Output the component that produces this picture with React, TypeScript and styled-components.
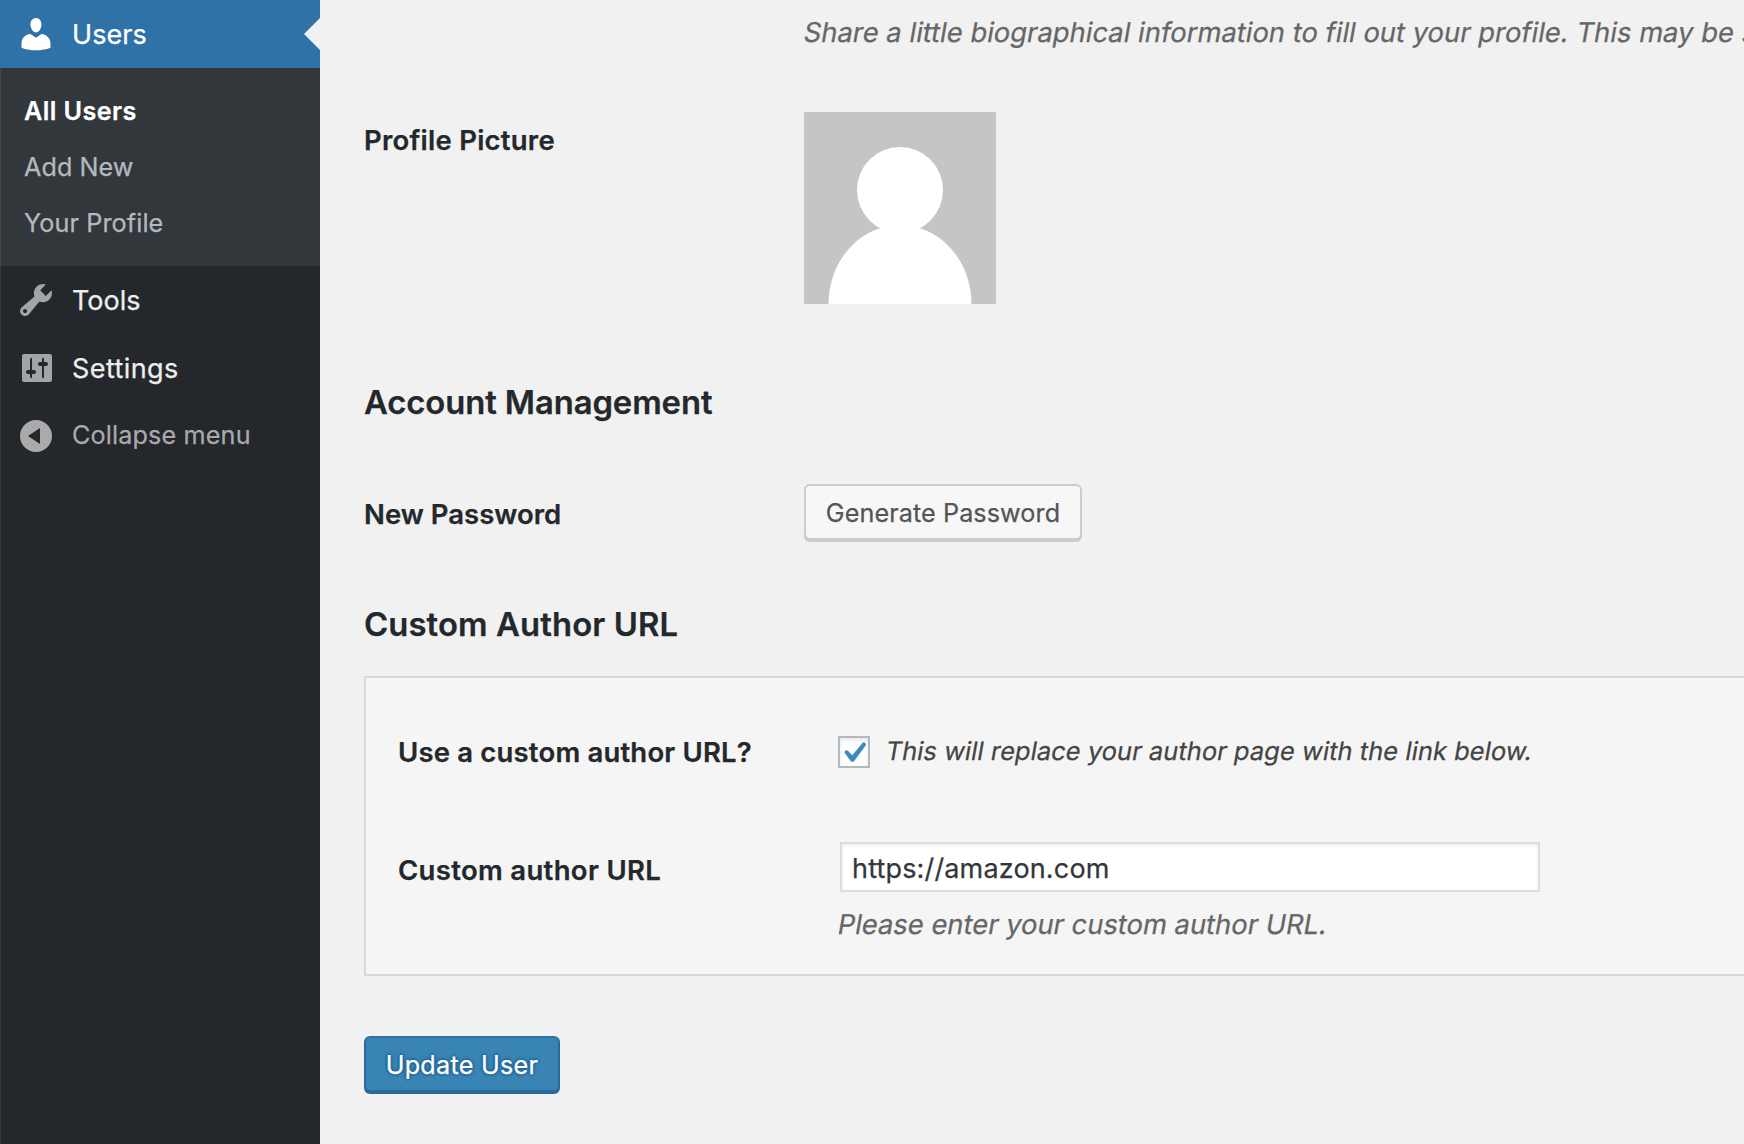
import React from "react";
import styled, { createGlobalStyle } from "styled-components";

const GlobalStyle = createGlobalStyle`
  html, body { margin: 0; padding: 0; }
  body { background: #f1f1f1; overflow: hidden; }
  *, *::before, *::after { box-sizing: border-box; }
`;

const Page = styled.div`
  display: flex;
  width: 1744px;
  height: 1144px;
  overflow: hidden;
  background: #f1f1f1;
  color: #444;
  font-family: Inter, Roboto, "Liberation Sans", sans-serif;
  font-size: 27px;
  -webkit-text-stroke: 0.25px currentColor;
`;

const Sidebar = styled.nav`
  flex: none;
  width: 320px;
  background: #24272c;
  box-shadow: inset 1px 0 0 #33383d;
`;

const MenuItem = styled.a<{ $current?: boolean }>`
  position: relative;
  display: flex;
  align-items: center;
  height: 68px;
  padding-left: 16px;
  gap: 16px;
  color: ${(p) => (p.$current ? "#fff" : "#eee")};
  background: ${(p) => (p.$current ? "#2f72a7" : "transparent")};
`;

const Arrow = styled.span`
  position: absolute;
  right: 0;
  top: 18px;
  border: 16px solid transparent;
  border-left-width: 0;
  border-right-color: #f1f1f1;
`;

const Glyph = styled.svg<{ $fill?: string }>`
  flex: none;
  width: 40px;
  height: 40px;
  fill: ${(p) => p.$fill ?? "#a0a5aa"};
`;

const Txt = styled.span<{ $ls: number; $size?: number }>`
  white-space: nowrap;
  letter-spacing: ${(p) => p.$ls}px;
  font-size: ${(p) => p.$size ?? 27}px;
`;

const Slanted = styled(Txt)`
  display: inline-block;
  transform: skewX(-10deg);
`;

const Submenu = styled.div`
  height: 198px;
  padding: 15px 0 15px 24px;
  background: #32373c;
  box-shadow: inset 1px 0 0 #3f4449;
`;

const SubItem = styled.a<{ $current?: boolean }>`
  display: block;
  height: 56px;
  line-height: 56px;
  color: ${(p) => (p.$current ? "#fff" : "#b4b9be")};
  font-weight: ${(p) => (p.$current ? 600 : 400)};
`;

const Collapse = styled(MenuItem)`
  height: 68px;
  color: #aaa;
`;

const CollapseText = styled(Txt)`
  padding-bottom: 3px;
`;

const Content = styled.main`
  flex: 1;
  min-width: 0;
  padding-left: 44px;
`;

const Row = styled.div<{ $h: number }>`
  display: flex;
  height: ${(p) => p.$h}px;
`;

const Label = styled.div<{ $top: number }>`
  flex: none;
  width: 440px;
  padding-top: ${(p) => p.$top}px;
  line-height: 36px;
  font-weight: 600;
  color: #23282d;
`;

const Field = styled.div<{ $top?: number }>`
  padding-top: ${(p) => p.$top ?? 0}px;
`;

const Hint = styled.p<{ $color?: string }>`
  margin: 0;
  line-height: 40px;
  color: ${(p) => p.$color ?? "#666"};
`;

const Avatar = styled.svg`
  display: block;
  width: 192px;
  height: 192px;
`;

const Heading = styled.h2<{ $h: number }>`
  margin: 0;
  height: ${(p) => p.$h}px;
  line-height: 38px;
  font-weight: 600;
  color: #23282d;
`;

const Button = styled.button<{ $primary?: boolean; $w: number }>`
  display: flex;
  align-items: center;
  justify-content: center;
  width: ${(p) => p.$w}px;
  height: 56px;
  padding: 1px 0 0;
  font-family: inherit;
  border: 2px solid;
  border-radius: 6px;
  ${(p) =>
    p.$primary
      ? `color: #fff;
         background: #3884b5;
         border-color: #2c71a5 #276a9b #276a9b;
         box-shadow: 0 2px 0 #276a9b;
         text-shadow: 0 -2px 2px #276a9b, 2px 0 2px #276a9b, 0 2px 2px #276a9b, -2px 0 2px #276a9b;`
      : `color: #555;
         background: #f7f7f7;
         border-color: #ccc;
         box-shadow: 0 2px 0 #ccc;`}
`;

const Panel = styled.section`
  height: 300px;
  margin-right: -20px;
  padding-left: 32px;
  border: 2px solid #d8d8d8;
  background: #f5f5f5;
`;

const CheckLine = styled.label`
  display: flex;
  align-items: center;
  height: 32px;
  gap: 16px;
`;

const CheckHint = styled(Hint)`
  padding-bottom: 2px;
`;

const Checkbox = styled.span`
  width: 32px;
  height: 32px;
  border: 2px solid #b4b9be;
  background: #fff;
  box-shadow: inset 0 2px 4px rgba(0, 0, 0, 0.1);
`;

const Tick = styled.svg`
  display: block;
  width: 28px;
  height: 28px;
`;

const UrlInput = styled.input`
  display: block;
  width: 700px;
  height: 50px;
  margin: 0 0 0 2px;
  padding: 2px 10px 0;
  border: 2px solid #ddd;
  border-radius: 0;
  outline: none;
  background: #fff;
  box-shadow: inset 0 2px 4px rgba(0, 0, 0, 0.07);
  color: #32373c;
  font-family: inherit;
  font-size: 27px;
  letter-spacing: 0.16px;
`;

const Submit = styled.div`
  padding-top: 60px;
`;

export default function App() {
  return (
    <Page>
      <GlobalStyle />
      <Sidebar>
        <MenuItem $current>
          <Glyph viewBox="0 0 20 20" $fill="#fff">
            <path d="M10 9.25c-2.27 0-2.73-3.44-2.73-3.44C7 4.02 7.82 2 9.97 2c2.16 0 2.98 2.02 2.71 3.81 0 0-.41 3.44-2.68 3.44zm0 2.57L12.72 10c2.39 0 4.52 2.33 4.52 4.53v2.49s-3.65 1.13-7.24 1.13c-3.65 0-7.24-1.13-7.24-1.13v-2.49c0-2.25 1.94-4.48 4.47-4.48z" />
          </Glyph>
          <Txt $ls={0.05}>Users</Txt>
          <Arrow />
        </MenuItem>
        <Submenu>
          <SubItem $current><Txt $ls={0.42} $size={25.2}>All Users</Txt></SubItem>
          <SubItem><Txt $ls={0.05} $size={25.2}>Add New</Txt></SubItem>
          <SubItem><Txt $ls={0.1} $size={25.2}>Your Profile</Txt></SubItem>
        </Submenu>
        <MenuItem>
          <Glyph viewBox="0 0 20 20">
            <path d="M16.68 9.77c-1.34 1.34-3.3 1.67-4.95.99l-5.41 6.52c-.99.99-2.59.99-3.58 0s-.99-2.59 0-3.57l6.52-5.42c-.68-1.65-.35-3.61.99-4.95 1.28-1.28 3.12-1.62 4.72-1.06l-2.89 2.89 2.82 2.82 2.86-2.87c.53 1.58.18 3.39-1.08 4.65zM3.81 16.21c.4.39 1.04.39 1.43 0 .4-.4.4-1.04 0-1.43-.39-.4-1.03-.4-1.43 0-.39.39-.39 1.03 0 1.43z" />
          </Glyph>
          <Txt $ls={0}>Tools</Txt>
        </MenuItem>
        <MenuItem>
          <Glyph viewBox="0 0 20 20">
            <path d="M18 16V4c0-.55-.45-1-1-1H4c-.55 0-1 .45-1 1v12c0 .55.45 1 1 1h13c.55 0 1-.45 1-1zM8 11h1c.55 0 1 .45 1 1s-.45 1-1 1H8v1.5c0 .28-.22.5-.5.5s-.5-.22-.5-.5V13H6c-.55 0-1-.45-1-1s.45-1 1-1h1V5.500c0-.28.22-.5.5-.5s.5.22.5.5V11zm5-2h-1c-.55 0-1-.45-1-1s.45-1 1-1h1V5.500c0-.28.22-.5.5-.5s.5.22.5.5V7h1c.55 0 1 .45 1 1s-.45 1-1 1h-1v5.500c0 .28-.22.5-.5.5s-.5-.22-.5-.5V9z" />
          </Glyph>
          <Txt $ls={0.42}>Settings</Txt>
        </MenuItem>
        <Collapse>
          <Glyph viewBox="0 0 20 20" $fill="#aaa">
            <path fillRule="evenodd" d="M10 2a8 8 0 1 0 0 16 8 8 0 0 0 0-16zM12 14l-6-4 6-4z" />
          </Glyph>
          <CollapseText $ls={0.14} $size={25.2}>Collapse menu</CollapseText>
        </Collapse>
      </Sidebar>

      <Content>
        <Row $h={112}>
          <Label $top={0} />
          <Field $top={13}>
            <Hint><Slanted $ls={0.05} $size={27.3}>Share a little biographical information to fill out your profile. This may be shown publicly.</Slanted></Hint>
          </Field>
        </Row>
        <Row $h={269}>
          <Label $top={10}><Txt $ls={0.24} $size={27.5}>Profile Picture</Txt></Label>
          <Field>
            <Avatar viewBox="0 0 192 192">
              <rect width="192" height="192" fill="#c5c5c5" />
              <circle cx="96" cy="78" r="43" fill="#fff" />
              <ellipse cx="96" cy="192" rx="71.500" ry="79" fill="#fff" />
            </Avatar>
          </Field>
        </Row>
        <Heading $h={103}><Txt $ls={-0.09} $size={32.8}>Account Management</Txt></Heading>
        <Row $h={119}>
          <Label $top={12}><Txt $ls={0} $size={27.5}>New Password</Txt></Label>
          <Field>
            <Button $w={278}><Txt $ls={0.08} $size={25.2}>Generate Password</Txt></Button>
          </Field>
        </Row>
        <Heading $h={73}><Txt $ls={0.11} $size={32.8}>Custom Author URL</Txt></Heading>
        <Panel>
          <Row $h={164}>
            <Label $top={56}><Txt $ls={0.18} $size={27.5}>Use a custom author URL?</Txt></Label>
            <Field $top={58}>
              <CheckLine>
                <Checkbox>
                  <Tick viewBox="0 0 28 28">
                    <path d="M4.900 15.300Q4 13.700 5.200 12.800Q6.900 11.500 8.200 12.900L12.300 17.300L22.400 5Q23.700 3.700 25.200 4.900Q26.700 6.200 25.500 7.700L14.200 23Q12.400 24.700 10.600 23Z" fill="#3d8bbd" />
                  </Tick>
                </Checkbox>
                <CheckHint $color="#444"><Slanted $ls={0.08} $size={25.4}>This will replace your author page with the link below.</Slanted></CheckHint>
              </CheckLine>
            </Field>
          </Row>
          <Row $h={132}>
            <Label $top={10}><Txt $ls={0.32} $size={27.5}>Custom author URL</Txt></Label>
            <Field>
              <UrlInput defaultValue="https://amazon.com" />
              <Field $top={13}>
                <Hint><Slanted $ls={0.03} $size={27.3}>Please enter your custom author URL.</Slanted></Hint>
              </Field>
            </Field>
          </Row>
        </Panel>
        <Submit>
          <Button $primary $w={196}><Txt $ls={0.27} $size={25.2}>Update User</Txt></Button>
        </Submit>
      </Content>
    </Page>
  );
}
